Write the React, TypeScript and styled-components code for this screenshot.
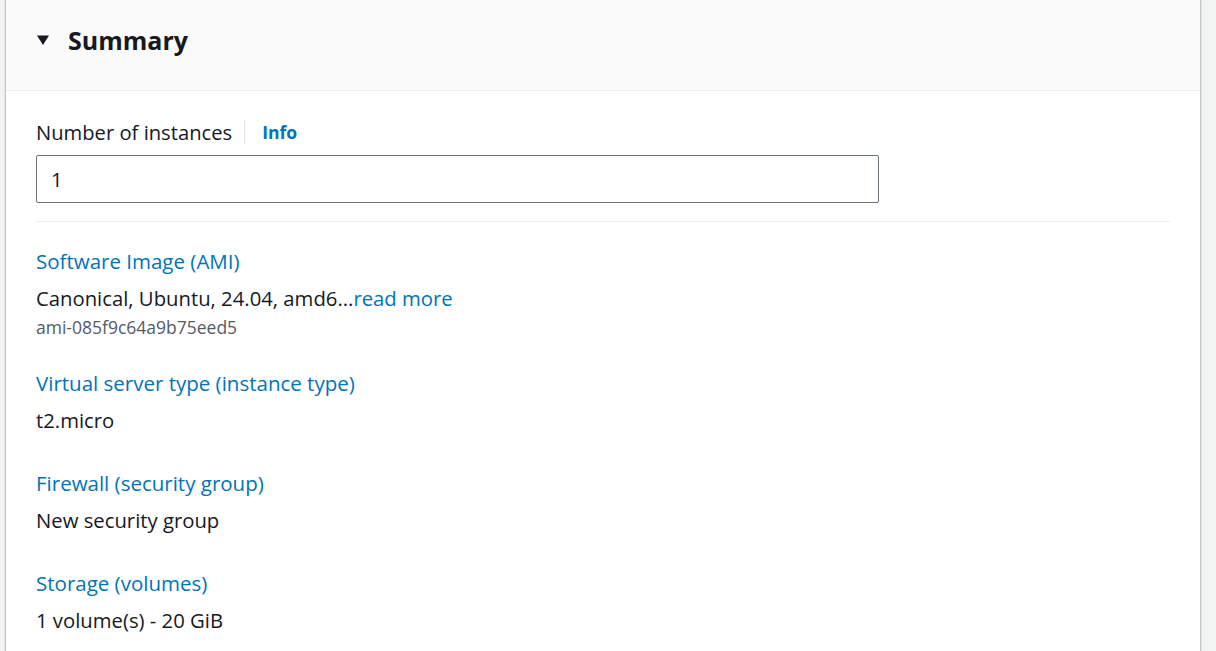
import React from 'react';
import styled, { createGlobalStyle } from 'styled-components';

const GlobalStyle = createGlobalStyle`
  html, body {
    margin: 0;
    padding: 0;
    background: #f2f3f3;
    font-family: "Open Sans", "Noto Sans", "Liberation Sans", Arial, sans-serif;
    color: #16191f;
  }
`;

const Page = styled.div`
  height: 651px;
  overflow: hidden;
  padding-left: 5px;
`;

const Card = styled.section`
  width: 1194px;
  min-height: 700px;
  background: #ffffff;
  border-left: 1px solid #c6c9cc;
  border-right: 1px solid #c6c9cc;
  box-shadow: 1px 0 0 #e1e4e4, -1px 0 0 #e1e4e4;
`;

const Header = styled.header`
  height: 91px;
  box-sizing: border-box;
  background: #fafafa;
  border-bottom: 1px solid #eaeded;
  display: flex;
  align-items: center;
  gap: 19px;
  padding: 0 0 10px 31px;
`;

const Caret = styled.svg`
  width: 12px;
  height: 12px;
  flex: none;
`;

const Title = styled.h2`
  margin: 0;
  font-size: 25px;
  font-weight: 700;
`;

const Body = styled.div`
  padding: 28px 30px 0 30px;
`;

const FieldLabelRow = styled.div`
  display: flex;
  align-items: center;
  height: 26px;
`;

const Label = styled.span`
  font-size: 20.2px;
  padding-right: 12px;
  border-right: 1px solid #e1e4e4;
  line-height: 24px;
`;

const InfoLink = styled.a`
  font-size: 17.5px;
  font-weight: 700;
  color: #0073bb;
  margin-left: 17px;
  text-decoration: none;
`;

const Input = styled.div`
  margin-top: 10px;
  width: 843px;
  height: 48px;
  box-sizing: border-box;
  border: 1px solid #687078;
  border-radius: 2px;
  display: flex;
  align-items: center;
  padding-left: 14px;
  font-size: 20.2px;
`;

const Divider = styled.hr`
  margin: 18px 0 0 0;
  border: none;
  border-top: 1px solid #eaeded;
`;

const List = styled.dl`
  margin: 21px 0 0 0;
  display: flex;
  flex-direction: column;
  gap: 27px;
`;

const Item = styled.div`
  display: flex;
  flex-direction: column;
`;

const Term = styled.dt`
  color: #0073bb;
  font-size: 20.5px;
  line-height: 36px;
`;

const Value = styled.dd`
  margin: 0;
  padding-top: 1px;
  font-size: 20.3px;
  line-height: 36px;
`;

const More = styled.a`
  color: #0073bb;
  text-decoration: none;
`;

const Sub = styled.dd`
  margin: 0;
  color: #545b64;
  font-size: 17.5px;
  line-height: 22px;
`;

const App = () => (
  <>
    <GlobalStyle />
    <Page>
      <Card>
        <Header>
          <Caret viewBox="0 0 12 12">
            <path d="M0 1.5h12L6 11z" fill="#16191f" />
          </Caret>
          <Title>Summary</Title>
        </Header>
        <Body>
          <FieldLabelRow>
            <Label>Number of instances</Label>
            <InfoLink>Info</InfoLink>
          </FieldLabelRow>
          <Input>1</Input>
          <Divider />
          <List>
            <Item>
              <Term>Software Image (AMI)</Term>
              <Value>
                Canonical, Ubuntu, 24.04, amd6...<More>read more</More>
              </Value>
              <Sub>ami-085f9c64a9b75eed5</Sub>
            </Item>
            <Item>
              <Term>Virtual server type (instance type)</Term>
              <Value>t2.micro</Value>
            </Item>
            <Item>
              <Term>Firewall (security group)</Term>
              <Value>New security group</Value>
            </Item>
            <Item>
              <Term>Storage (volumes)</Term>
              <Value>1 volume(s) - 20 GiB</Value>
            </Item>
          </List>
        </Body>
      </Card>
    </Page>
  </>
);

export default App;
